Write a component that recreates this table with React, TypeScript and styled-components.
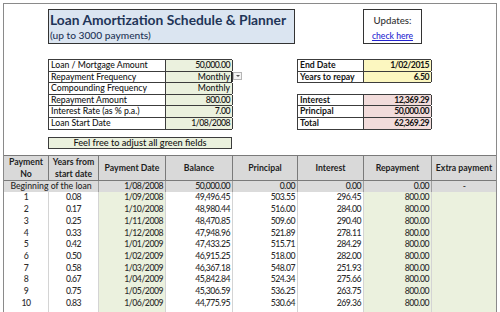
import React from "react";
import styled, { createGlobalStyle } from "styled-components";

const GlobalStyle = createGlobalStyle`
  html, body { margin: 0; padding: 0; background: #fff; }
  body { font-family: Lato, "Open Sans", sans-serif; color: #1a1a1a; font-size: 8.7px; font-weight: 500; }
  * { box-sizing: border-box; }
`;

const COLS = "44px 50px 67px 67px 65px 66px 68px 65px";
const GREEN = "#ebf1de";
const YELLOW = "#fcf7c0";
const PINK = "#f2dcdb";
const LINE = "#3c3c3c";

const Page = styled.div`
  width: 500px;
  height: 312px;
  overflow: hidden;
  background: #fff;
  padding: 3px 0 0 3px;
`;

const Frame = styled.div`
  width: 494px;
  min-height: 320px;
  border: 1px solid #8a8a8a;
  border-bottom: none;
`;

const TopArea = styled.section`
  display: grid;
  grid-template-columns: ${COLS};
  padding-top: 5px;
`;

const TitleBox = styled.div`
  grid-column: 2 / 6;
  grid-row: 1;
  height: 35px;
  margin-right: 2px;
  background: #dbe5f1;
  border: 1px solid #333;
  padding: 2px 0 0 1px;
  display: flex;
  flex-direction: column;
  color: #1f3558;
`;

const Title = styled.div`
  font-weight: 700;
  font-size: 13.8px;
  line-height: 15px;
  white-space: nowrap;
`;

const Subtitle = styled.div`
  font-size: 10.2px;
  line-height: 13px;
  margin-top: 1.5px;
`;

const UpdatesBox = styled.div`
  grid-column: 7;
  grid-row: 1;
  width: 59px;
  height: 35px;
  border: 1px solid #333;
  background: #fff;
  display: flex;
  flex-direction: column;
  align-items: center;
  padding-top: 4px;
  gap: 4px;
`;

const UpdatesLabel = styled.div`
  font-size: 9.7px;
  color: #333;
  line-height: 12px;
`;

const Link = styled.a`
  font-size: 8.6px;
  color: #2424d0;
  text-decoration: underline;
  line-height: 12px;
`;

const InputsWrap = styled.div`
  grid-column: 2 / 5;
  grid-row: 2;
  margin-top: 15px;
  position: relative;
`;

const ResultsWrap = styled.div`
  grid-column: 6 / 8;
  grid-row: 2;
  margin-top: 15px;
  display: flex;
  flex-direction: column;
  gap: 11px;
`;

const MiniTable = styled.div`
  border-top: 1px solid ${LINE};
  border-left: 1px solid ${LINE};
`;

const MiniRow = styled.div<{ $cols: string; $h: number }>`
  display: grid;
  grid-template-columns: ${(p) => p.$cols};
  grid-template-rows: 100%;
  height: ${(p) => p.$h}px;
  border-bottom: 1px solid ${LINE};
`;

const MiniCell = styled.div<{ $bg?: string; $right?: boolean; $bold?: boolean; $active?: boolean; $num?: boolean }>`
  display: flex;
  align-items: center;
  justify-content: ${(p) => (p.$right ? "flex-end" : "flex-start")};
  padding: 0 2px;
  line-height: 1;
  min-height: 0;
  background: ${(p) => p.$bg || "#fff"};
  border-right: 1px solid ${LINE};
  font-weight: ${(p) => (p.$bold ? 700 : 500)};
  letter-spacing: ${(p) => (p.$num ? "-0.5px" : "0")};
  color: #141414;
  white-space: nowrap;
  box-shadow: ${(p) => (p.$active ? "inset -1px 0 0 #222" : "none")};
`;

const Dropdown = styled.div`
  position: absolute;
  left: 185px;
  top: 13px;
  width: 9px;
  height: 8px;
  border: 1px solid #b5b5b5;
  background: #f4f4f4;
  display: flex;
  align-items: center;
  justify-content: center;
  &::after {
    content: "";
    border-left: 2px solid transparent;
    border-right: 2px solid transparent;
    border-top: 2px solid #555;
  }
`;

const NoteBox = styled.div`
  grid-column: 2 / 5;
  grid-row: 3;
  margin-top: 7px;
  height: 12px;
  background: ${GREEN};
  border: 1px solid ${LINE};
  display: flex;
  align-items: center;
  justify-content: center;
  font-size: 9.2px;
  line-height: 1;
  color: #141414;
`;

const Table = styled.div`
  margin-top: 6px;
`;

const HeaderRow = styled.div`
  display: grid;
  grid-template-columns: ${COLS};
  grid-template-rows: 100%;
  height: 26px;
  background: #d9d9d9;
  border-top: 1px solid #7a7a7a;
  border-bottom: 1px solid #7a7a7a;
`;

const HeadCell = styled.div`
  display: flex;
  align-items: center;
  justify-content: center;
  text-align: center;
  font-weight: 700;
  line-height: 12px;
  color: #1e1e1e;
  & + & {
    border-left: 1px solid #7a7a7a;
  }
`;

const StartRow = styled.div`
  display: grid;
  grid-template-columns: ${COLS};
  grid-template-rows: 100%;
  height: 11px;
  background: #dbdbdb;
`;

const StartCell = styled.div<{ $span?: number; $align?: string; $text?: boolean }>`
  grid-column: span ${(p) => p.$span || 1};
  display: flex;
  align-items: center;
  justify-content: ${(p) => p.$align || "flex-end"};
  padding: 0 2px;
  line-height: 1;
  letter-spacing: ${(p) => (p.$text ? "0" : "-0.5px")};
  color: #262626;
  white-space: nowrap;
  & + & {
    border-left: 1px solid #a0a0a0;
  }
`;

const DataRow = styled.div`
  display: grid;
  grid-template-columns: ${COLS};
  grid-template-rows: 100%;
  height: 11.7px;
`;

const DataCell = styled.div<{ $green?: boolean; $center?: boolean }>`
  display: flex;
  align-items: center;
  justify-content: ${(p) => (p.$center ? "center" : "flex-end")};
  padding: 0 2px;
  line-height: 1;
  letter-spacing: -0.5px;
  background: ${(p) => (p.$green ? GREEN : "#fff")};
  color: #2e2e2e;
  white-space: nowrap;
  & + & {
    border-left: 1px solid #d4d4d4;
  }
`;

const ROW_H = [12, 11, 12, 11, 12, 12];

const inputs: [string, string, boolean, boolean][] = [
  ["Loan / Mortgage Amount", "50,000.00", false, true],
  ["Repayment Frequency", "Monthly", true, false],
  ["Compounding Frequency", "Monthly", false, false],
  ["Repayment Amount", "800.00", false, true],
  ["Interest Rate (as % p.a.)", "7.00", false, true],
  ["Loan Start Date", "1/08/2008", false, true],
];

const dates: [string, string][] = [
  ["End Date", "1/02/2015"],
  ["Years to repay", "6.50"],
];

const totals: [string, string][] = [
  ["Interest", "12,369.29"],
  ["Principal", "50,000.00"],
  ["Total", "62,369.29"],
];

const rows: string[][] = [
  ["1", "0.08", "1/09/2008", "49,496.45", "503.55", "296.45", "800.00"],
  ["2", "0.17", "1/10/2008", "48,980.44", "516.00", "284.00", "800.00"],
  ["3", "0.25", "1/11/2008", "48,470.85", "509.60", "290.40", "800.00"],
  ["4", "0.33", "1/12/2008", "47,948.96", "521.89", "278.11", "800.00"],
  ["5", "0.42", "1/01/2009", "47,433.25", "515.71", "284.29", "800.00"],
  ["6", "0.50", "1/02/2009", "46,915.25", "518.00", "282.00", "800.00"],
  ["7", "0.58", "1/03/2009", "46,367.18", "548.07", "251.93", "800.00"],
  ["8", "0.67", "1/04/2009", "45,842.84", "524.34", "275.66", "800.00"],
  ["9", "0.75", "1/05/2009", "45,306.59", "536.25", "263.75", "800.00"],
  ["10", "0.83", "1/06/2009", "44,775.95", "530.64", "269.36", "800.00"],
  ["", "", "", "", "", "", ""],
];

export default function App() {
  return (
    <Page>
      <GlobalStyle />
      <Frame>
        <TopArea>
          <TitleBox>
            <Title>Loan Amortization Schedule &amp; Planner</Title>
            <Subtitle>(up to 3000 payments)</Subtitle>
          </TitleBox>
          <UpdatesBox>
            <UpdatesLabel>Updates:</UpdatesLabel>
            <Link href="#">check here</Link>
          </UpdatesBox>

          <InputsWrap>
            <MiniTable>
              {inputs.map(([label, value, active, num], i) => (
                <MiniRow key={label} $cols="117px 67px" $h={ROW_H[i]}>
                  <MiniCell>{label}</MiniCell>
                  <MiniCell $bg={GREEN} $right $active={active} $num={num}>
                    {value}
                  </MiniCell>
                </MiniRow>
              ))}
            </MiniTable>
            <Dropdown />
          </InputsWrap>

          <ResultsWrap>
            <MiniTable>
              {dates.map(([label, value], i) => (
                <MiniRow key={label} $cols="66px 68px" $h={ROW_H[i]}>
                  <MiniCell $bold>{label}</MiniCell>
                  <MiniCell $bold $right $num $bg={YELLOW}>{value}</MiniCell>
                </MiniRow>
              ))}
            </MiniTable>
            <MiniTable>
              {totals.map(([label, value], i) => (
                <MiniRow key={label} $cols="66px 68px" $h={ROW_H[i + 3]}>
                  <MiniCell $bold>{label}</MiniCell>
                  <MiniCell $bold $right $num $bg={PINK}>{value}</MiniCell>
                </MiniRow>
              ))}
            </MiniTable>
          </ResultsWrap>

          <NoteBox>Feel free to adjust all green fields</NoteBox>
        </TopArea>

        <Table>
          <HeaderRow>
            <HeadCell>Payment<br />No</HeadCell>
            <HeadCell>Years from<br />start date</HeadCell>
            <HeadCell>Payment Date</HeadCell>
            <HeadCell>Balance</HeadCell>
            <HeadCell>Principal</HeadCell>
            <HeadCell>Interest</HeadCell>
            <HeadCell>Repayment</HeadCell>
            <HeadCell>Extra payment</HeadCell>
          </HeaderRow>
          <StartRow>
            <StartCell $span={2} $align="center" $text>Beginning of the loan</StartCell>
            <StartCell>1/08/2008</StartCell>
            <StartCell>50,000.00</StartCell>
            <StartCell>0.00</StartCell>
            <StartCell>0.00</StartCell>
            <StartCell>0.00</StartCell>
            <StartCell $align="center">-</StartCell>
          </StartRow>
          {rows.map((r, i) => (
            <DataRow key={i}>
              <DataCell $center>{r[0]}</DataCell>
              <DataCell $center>{r[1]}</DataCell>
              <DataCell $green>{r[2]}</DataCell>
              <DataCell>{r[3]}</DataCell>
              <DataCell>{r[4]}</DataCell>
              <DataCell>{r[5]}</DataCell>
              <DataCell $green>{r[6]}</DataCell>
              <DataCell $green />
            </DataRow>
          ))}
        </Table>
      </Frame>
    </Page>
  );
}
